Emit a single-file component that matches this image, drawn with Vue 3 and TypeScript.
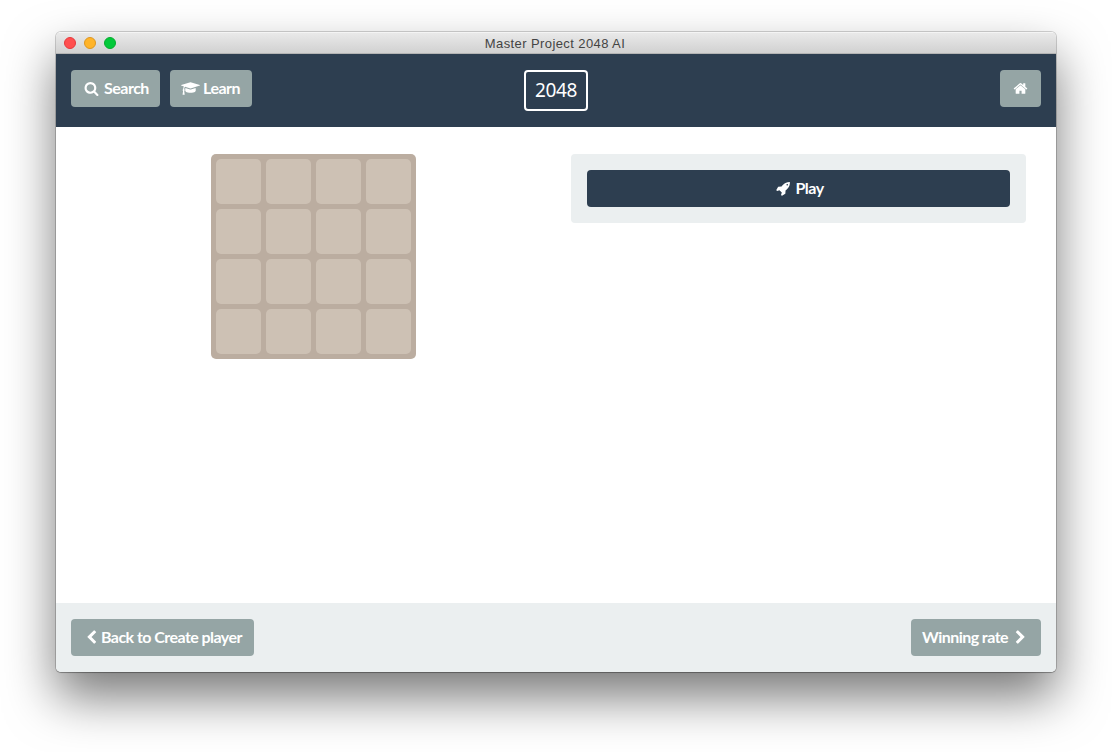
<script setup lang="ts">
interface Icon {
  box: string
  d: string
}

const icons: Record<string, Icon> = {
  search: {
    box: '0 0 1792 1792',
    d: 'M1216 832q0-185-131.5-316.5t-316.5-131.5-316.5 131.5-131.5 316.5 131.5 316.5 316.5 131.5 316.5-131.5 131.5-316.5zm512 832q0 52-38 90t-90 38q-54 0-90-38l-343-342q-179 124-399 124-143 0-273.5-55.5t-225-150-150-225-55.5-273.5 55.5-273.5 150-225 225-150 273.5-55.5 273.5 55.5 225 150 150 225 55.5 273.5q0 220-124 399l343 343q37 37 37 90z',
  },
  learn: {
    box: '0 0 2304 1792',
    d: 'M1774 836l18 316q4 69-82 128t-235 93.5-323 34.5-323-34.5-235-93.5-82-128l18-316 574 181q22 7 48 7t48-7zm530-324q0 23-22 31l-1120 352q-4 1-10 1t-10-1l-652-206q-43 34-71 111.5t-34 178.5q63 36 63 109 0 69-58 107l58 433q2 14-8 25-9 11-24 11h-192q-15 0-24-11-10-11-8-25l58-433q-58-38-58-107 0-73 65-111 11-207 98-330l-333-104q-22-8-22-31t22-31l1120-352q4-1 10-1t10 1l1120 352q22 8 22 31z',
  },
  home: {
    box: '0 0 1792 1792',
    d: 'M1472 992v480q0 26-19 45t-45 19h-384v-384h-256v384h-384q-26 0-45-19t-19-45v-480q0-1 .5-3t.5-3l575-474 575 474q1 2 1 6zm223-69l-62 74q-8 9-21 11h-3q-13 0-21-7l-692-577-692 577q-12 8-24 7-13-2-21-11l-62-74q-8-10-7-23.5t11-21.5l719-599q32-26 76-26t76 26l244 204v-195q0-14 9-23t23-9h192q14 0 23 9t9 23v408l219 182q10 8 11 21.5t-7 23.5z',
  },
  rocket: {
    box: '0 0 1792 1792',
    d: 'M1440 448q0-40-28-68t-68-28-68 28-28 68 28 68 68 28 68-28 28-68zm224-288q0 249-75.5 430.5t-253.5 360.5q-81 80-195 176l-20 379q-2 16-16 26l-384 224q-7 4-16 4-12 0-23-9l-64-64q-13-14-8-32l85-276-281-281-276 85q-3 1-9 1-14 0-23-9l-64-64q-17-19-5-39l224-384q10-14 26-16l379-20q96-114 176-195 188-187 358-258t431-71q14 0 24 9.5t10 22.5z',
  },
  left: {
    box: '0 0 1792 1792',
    d: 'M1427 301l-531 531 531 531q19 19 19 45t-19 45l-166 166q-19 19-45 19t-45-19l-742-742q-19-19-19-45t19-45l742-742q19-19 45-19t45 19l166 166q19 19 19 45t-19 45z',
  },
  right: {
    box: '0 0 1792 1792',
    d: 'M1363 877l-742 742q-19 19-45 19t-45-19l-166-166q-19-19-19-45t19-45l531-531-531-531q-19-19-19-45t19-45l166-166q19-19 45-19t45 19l742 742q19 19 19 45t-19 45z',
  },
}

const cells: number[] = Array.from({ length: 16 }, (_, i) => i)
</script>

<template>
  <div class="desktop">
    <div class="window">
      <div class="titlebar">
        <div class="lights">
          <span class="light red"></span>
          <span class="light yellow"></span>
          <span class="light green"></span>
        </div>
        <span class="title">Master Project 2048 AI</span>
      </div>

      <header class="header">
        <div class="side">
          <button class="btn search">
            <svg class="i-search" :viewBox="icons.search.box"><path :d="icons.search.d" /></svg>
            <span>Search</span>
          </button>
          <button class="btn learn">
            <svg class="i-learn" :viewBox="icons.learn.box"><path :d="icons.learn.d" /></svg>
            <span>Learn</span>
          </button>
        </div>
        <div class="logo"><span>2048</span></div>
        <div class="side end">
          <button class="btn home" aria-label="Home">
            <svg class="i-home" :viewBox="icons.home.box"><path :d="icons.home.d" /></svg>
          </button>
        </div>
      </header>

      <main class="main">
        <div class="board">
          <div v-for="c in cells" :key="c" class="cell"></div>
        </div>
        <div class="panel">
          <button class="btn play">
            <svg class="i-rocket" :viewBox="icons.rocket.box"><path :d="icons.rocket.d" /></svg>
            <span>Play</span>
          </button>
        </div>
      </main>

      <footer class="footer">
        <button class="btn back">
          <svg class="i-left" :viewBox="icons.left.box"><path :d="icons.left.d" /></svg>
          <span>Back to Create player</span>
        </button>
        <button class="btn next">
          <span>Winning rate</span>
          <svg class="i-right" :viewBox="icons.right.box"><path :d="icons.right.d" /></svg>
        </button>
      </footer>
    </div>
  </div>
</template>

<style>
body {
  margin: 0;
  background: #fff;
}
</style>

<style scoped>
.desktop {
  box-sizing: border-box;
  width: 1112px;
  height: 752px;
  padding: 32px 56px 80px;
  overflow: hidden;
  background: #fff;
  font-family: Lato, 'Liberation Sans', sans-serif;
}
.window {
  display: flex;
  flex-direction: column;
  height: 640px;
  border-radius: 5px;
  background: #fff;
  overflow: hidden;
  box-shadow: 0 0 0 1px rgba(0, 0, 0, 0.17), 0 1px 1px rgba(0, 0, 0, 0.2), 0 25px 50px rgba(0, 0, 0, 0.53);
}
.titlebar {
  box-sizing: border-box;
  display: grid;
  grid-template-columns: 1fr auto 1fr;
  align-items: center;
  height: 22px;
  flex: none;
  border-top: 1px solid #f4f4f4;
  border-bottom: 1px solid #b4b4b4;
  background: linear-gradient(#e9e9e9, #d1d1d1);
}
.lights {
  display: flex;
  gap: 8px;
  padding-left: 8px;
}
.light {
  box-sizing: border-box;
  width: 12px;
  height: 12px;
  border-radius: 50%;
  border: 1px solid;
}
.red {
  background: #ff4f4f;
  border-color: #e5393c;
}
.yellow {
  background: #ffb429;
  border-color: #dd9620;
}
.green {
  background: #02c93a;
  border-color: #06ab2e;
}
.title {
  padding-top: 2px;
  font: 13px/18px 'Liberation Sans', Arial, sans-serif;
  color: #444;
  margin-left: -2px;
  letter-spacing: 0.4px;
}
.header {
  box-sizing: border-box;
  display: grid;
  grid-template-columns: 1fr auto 1fr;
  align-items: start;
  flex: none;
  height: 73px;
  padding: 16px 15px;
  background: #2d3e50;
}
.side {
  display: flex;
  gap: 10px;
}
.end {
  justify-content: flex-end;
}
.btn {
  box-sizing: border-box;
  display: flex;
  align-items: center;
  height: 37px;
  padding: 0;
  border: 0;
  border-radius: 4px;
  background: #95a5a5;
  color: #fff;
  font: 700 16px/20px Lato, 'Liberation Sans', sans-serif;
  letter-spacing: -0.5px;
  white-space: nowrap;
}
.btn span {
  padding-bottom: 2px;
}
svg {
  display: block;
  flex: none;
  fill: currentColor;
}
.search {
  width: 89px;
  padding-left: 13px;
}
.learn {
  width: 82px;
  padding-left: 11px;
}
.home {
  width: 41px;
  justify-content: center;
}
.i-search {
  width: 15px;
  height: 15px;
  margin-right: 5px;
}
.i-learn {
  width: 19px;
  height: 15px;
  margin-right: 3px;
}
.i-home {
  width: 15px;
  height: 15px;
}
.logo {
  box-sizing: border-box;
  display: flex;
  align-items: center;
  justify-content: center;
  width: 64px;
  height: 41px;
  padding-bottom: 1px;
  border: 2px solid #fff;
  border-radius: 4px;
  color: #fff;
  font-family: 'Noto Sans', Lato, sans-serif;
  font-size: 19px;
  line-height: 24px;
  letter-spacing: -0.4px;
}
.main {
  flex: 1;
  display: grid;
  grid-template-columns: 205px 455px;
  justify-content: space-between;
  align-items: start;
  padding: 27px 30px 0 155px;
}
.board {
  box-sizing: border-box;
  display: grid;
  grid-template-columns: repeat(4, 45px);
  grid-auto-rows: 45px;
  gap: 5px;
  padding: 5px;
  border-radius: 5px;
  background: #bbada0;
}
.cell {
  border-radius: 5px;
  background: #cdc1b4;
}
.panel {
  padding: 16px;
  border-radius: 4px;
  background: #ebeff0;
}
.play {
  width: 100%;
  justify-content: center;
  padding-left: 3px;
  background: #2d3e50;
}
.i-rocket {
  width: 15px;
  height: 15px;
  margin-right: 4px;
}
.footer {
  box-sizing: border-box;
  display: flex;
  justify-content: space-between;
  flex: none;
  height: 69px;
  padding: 16px 15px;
  background: #ebeff0;
}
.back {
  width: 183px;
  padding-left: 13px;
  letter-spacing: -0.55px;
}
.i-left {
  width: 15px;
  height: 15px;
  margin-right: 2px;
}
.next {
  width: 130px;
  padding-left: 11px;
  letter-spacing: -0.55px;
}
.i-right {
  width: 15px;
  height: 15px;
  margin-left: 5px;
}
</style>
